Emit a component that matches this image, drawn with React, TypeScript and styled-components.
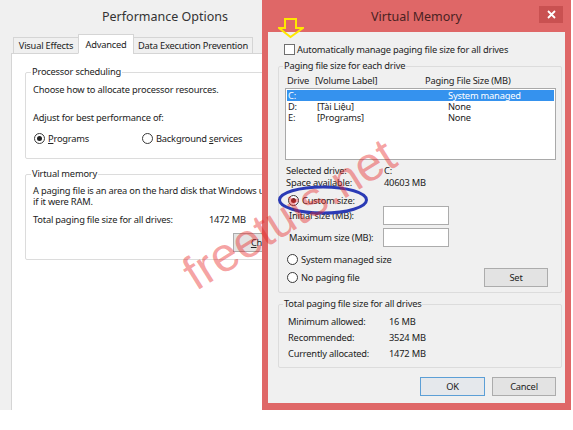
import React from 'react';
import styled, { createGlobalStyle } from 'styled-components';

const GlobalStyle = createGlobalStyle`
  html, body {
    margin: 0;
    padding: 0;
    background: #fff;
  }
  body {
    font-family: "Noto Sans", "Liberation Sans", sans-serif;
    font-size: 9.3px;
    letter-spacing: -0.2px;
    color: #222;
  }
`;

const Screen = styled.div`
  position: relative;
  width: 573px;
  height: 430px;
  overflow: hidden;
`;

const Stage = styled.div`
  display: flex;
  height: 410px;
`;

/* ---------- Performance Options (left, partly hidden) ---------- */

const PerfClip = styled.div`
  flex: none;
  width: 262px;
  height: 100%;
  overflow: hidden;
`;

const PerfWindow = styled.div`
  width: 330px;
  height: 100%;
  background: #f0f0f0;
  display: flex;
  flex-direction: column;
`;

const PerfTitle = styled.div`
  height: 32px;
  display: flex;
  align-items: center;
  justify-content: center;
  font-size: 12.5px;
  letter-spacing: 0;
  color: #333;
`;

const TabStrip = styled.div`
  position: relative;
  z-index: 1;
  height: 22px;
  margin-bottom: -1px;
  padding-left: 13px;
  display: flex;
  align-items: flex-end;
`;

const Tab = styled.div<{ $active?: boolean; $w: number }>`
  box-sizing: border-box;
  width: ${p => p.$w}px;
  height: ${p => (p.$active ? 20 : 17)}px;
  margin-right: -1px;
  display: flex;
  align-items: center;
  justify-content: center;
  border: 1px solid #d5d5d5;
  border-bottom-color: ${p => (p.$active ? '#fff' : '#d5d5d5')};
  background: ${p => (p.$active ? '#fff' : '#f0f0f0')};
  white-space: nowrap;
`;

const TabPanel = styled.div`
  flex: 1;
  margin-left: 11px;
  padding: 12px 13px 0;
  background: #fff;
  border: 1px solid #d5d5d5;
  border-bottom: none;
`;

const Group = styled.fieldset<{ $mt?: number; $pl?: number; $pr?: number; $pb?: number }>`
  margin: ${p => p.$mt ?? 0}px 0 0;
  padding: 0 ${p => p.$pr ?? 7}px ${p => p.$pb ?? 0}px ${p => p.$pl ?? 7}px;
  min-width: 0;
  border: 1px solid #dcdcdc;
  border-radius: 2px;
  display: flex;
  flex-direction: column;
`;

const Legend = styled.legend`
  margin-left: -2px;
  padding: 0 1px;
  line-height: 12px;
  white-space: nowrap;
`;

const Line = styled.div<{ $mt?: number; $h?: number }>`
  margin-top: ${p => p.$mt ?? 0}px;
  line-height: ${p => p.$h ?? 12}px;
  white-space: nowrap;
`;

const RadioRow = styled.div<{ $mt?: number }>`
  margin-top: ${p => p.$mt ?? 0}px;
  display: grid;
  grid-template-columns: 108px auto;
  padding-left: 1px;
`;

const Option = styled.label<{ $indent?: number }>`
  display: flex;
  align-items: center;
  gap: 3px;
  height: 12px;
  padding-left: ${p => p.$indent ?? 0}px;
  white-space: nowrap;
`;

const Radio = styled.span<{ $checked?: boolean; $dot?: string }>`
  flex: none;
  box-sizing: border-box;
  width: 11px;
  height: 11px;
  border-radius: 50%;
  border: 1px solid #3a3a3a;
  background: #fff;
  display: inline-flex;
  align-items: center;
  justify-content: center;
  &::after {
    content: '';
    width: 5px;
    height: 5px;
    border-radius: 50%;
    background: ${p => (p.$checked ? p.$dot ?? '#222' : 'transparent')};
  }
`;

const ValueRow = styled.div<{ $mt?: number; $label: number; $h?: number; $pl?: number }>`
  margin-top: ${p => p.$mt ?? 0}px;
  padding-left: ${p => p.$pl ?? 0}px;
  display: grid;
  grid-template-columns: ${p => p.$label}px auto;
  align-items: center;
  height: ${p => p.$h ?? 12}px;
  white-space: nowrap;
`;

const ButtonRow = styled.div<{ $mt?: number; $mr?: number }>`
  margin-top: ${p => p.$mt ?? 0}px;
  margin-right: ${p => p.$mr ?? 0}px;
  display: flex;
  justify-content: flex-end;
  gap: 7px;
`;

const Button = styled.div<{ $w: number; $default?: boolean }>`
  box-sizing: border-box;
  width: ${p => p.$w}px;
  height: 19px;
  display: flex;
  align-items: center;
  justify-content: center;
  background: ${p => (p.$default ? '#e5e8ec' : '#e3e3e3')};
  border: 1px solid ${p => (p.$default ? '#5c9fd6' : '#acacac')};
  color: #222;
  white-space: nowrap;
`;

/* ---------- Virtual Memory (right) ---------- */

const VmWindow = styled.div`
  position: relative;
  flex: none;
  box-sizing: border-box;
  width: 309px;
  height: 100%;
  padding: 0 6px 7px;
  background: #df6767;
  display: flex;
  flex-direction: column;
`;

const VmTitleBar = styled.div`
  height: 32px;
  display: grid;
  grid-template-columns: 1fr auto 1fr;
`;

const VmTitle = styled.div`
  grid-column: 2;
  align-self: center;
  font-size: 12.5px;
  letter-spacing: 0;
  color: #4a2222;
  white-space: nowrap;
`;

const CloseButton = styled.div`
  grid-column: 3;
  justify-self: end;
  margin: 6px 2px 0 0;
  width: 24px;
  height: 17px;
  background: #c95151;
  display: flex;
  align-items: center;
  justify-content: center;
`;

const Client = styled.div`
  flex: 1;
  padding: 11px 3px 0 10px;
  background: #f0f0f0;
  display: flex;
  flex-direction: column;
`;

const CheckRow = styled.label`
  display: flex;
  align-items: center;
  gap: 2px;
  height: 12px;
  padding-left: 6px;
  white-space: nowrap;
`;

const CheckBox = styled.span`
  flex: none;
  box-sizing: border-box;
  width: 11px;
  height: 11px;
  border: 1px solid #6f6f6f;
  background: #fff;
`;

const DriveHeader = styled.div`
  margin-top: 3px;
  display: grid;
  grid-template-columns: 28px 110px auto;
  padding-left: 2px;
  line-height: 12px;
  white-space: nowrap;
`;

const DriveList = styled.div`
  margin-top: 1px;
  margin-right: 1px;
  height: 72px;
  box-sizing: border-box;
  padding: 1px;
  background: #fff;
  border: 1px solid #a9a9a9;
`;

const DriveRow = styled.div<{ $selected?: boolean }>`
  display: grid;
  grid-template-columns: 29px 131px auto;
  height: 11px;
  line-height: 11px;
  padding-left: 1px;
  background: ${p => (p.$selected ? '#3592ee' : 'transparent')};
  color: ${p => (p.$selected ? '#fff' : '#222')};
  white-space: nowrap;
`;

const SizeRow = styled.div<{ $mt?: number }>`
  margin-top: ${p => p.$mt ?? 0}px;
  display: grid;
  grid-template-columns: 94px auto;
  align-items: center;
  padding-left: 4px;
  white-space: nowrap;
`;

const SizeInput = styled.div`
  box-sizing: border-box;
  width: 66px;
  height: 19px;
  background: #fff;
  border: 1px solid #acacac;
`;

const SplitRow = styled.div<{ $mt?: number }>`
  margin-top: ${p => p.$mt ?? 0}px;
  display: flex;
  align-items: center;
  justify-content: space-between;
  padding-right: 9px;
`;

const ArrowMark = styled.svg`
  position: absolute;
  left: 16px;
  top: 17px;
`;

const CircleMark = styled.svg`
  position: absolute;
  left: 14px;
  top: 184px;
`;

const Watermark = styled.div`
  position: absolute;
  left: 289px;
  top: 214px;
  transform: translate(-50%, -50%) rotate(-32deg);
  font-family: "Liberation Sans", Arial, sans-serif;
  font-size: 48px;
  letter-spacing: 0;
  color: rgba(232, 32, 32, 0.42);
  white-space: nowrap;
  pointer-events: none;
`;

const drives = [
  { letter: 'C:', label: '', size: 'System managed', selected: true },
  { letter: 'D:', label: '[Tài Liệu]', size: 'None' },
  { letter: 'E:', label: '[Programs]', size: 'None' },
];

const totals = [
  ['Minimum allowed:', '16 MB'],
  ['Recommended:', '3524 MB'],
  ['Currently allocated:', '1472 MB'],
];

const PerformanceOptions = () => (
  <PerfClip>
    <PerfWindow>
      <PerfTitle>Performance Options</PerfTitle>
      <TabStrip>
        <Tab $w={66}>Visual Effects</Tab>
        <Tab $w={56} $active>Advanced</Tab>
        <Tab $w={120}>Data Execution Prevention</Tab>
      </TabStrip>
      <TabPanel>
        <Group $pb={14}>
          <Legend>Processor scheduling</Legend>
          <Line $mt={6}>Choose how to allocate processor resources.</Line>
          <Line $mt={16}>Adjust for best performance of:</Line>
          <RadioRow $mt={8}>
            <Option>
              <Radio $checked />
              <span><u>P</u>rograms</span>
            </Option>
            <Option>
              <Radio />
              <span>Background <u>s</u>ervices</span>
            </Option>
          </RadioRow>
        </Group>
        <Group $mt={9} $pb={7}>
          <Legend>Virtual memory</Legend>
          <Line $mt={5} $h={11}>
            A paging file is an area on the hard disk that Windows uses as
            <br />
            if it were RAM.
          </Line>
          <ValueRow $mt={6} $label={176}>
            <span>Total paging file size for all drives:</span>
            <span>1472 MB</span>
          </ValueRow>
          <ButtonRow $mt={8}>
            <Button $w={75}><span><u>C</u>hange...</span></Button>
          </ButtonRow>
        </Group>
      </TabPanel>
    </PerfWindow>
  </PerfClip>
);

const VirtualMemory = () => (
  <VmWindow>
    <VmTitleBar>
      <VmTitle>Virtual Memory</VmTitle>
      <CloseButton>
        <svg width="9" height="9" viewBox="0 0 9 9">
          <path d="M1 1L8 8M8 1L1 8" stroke="#fff" strokeWidth="1.8" />
        </svg>
      </CloseButton>
    </VmTitleBar>
    <Client>
      <CheckRow>
        <CheckBox />
        <span>Automatically manage paging file size for all drives</span>
      </CheckRow>
      <Group $mt={5} $pl={6} $pr={4} $pb={5}>
        <Legend>Paging file size for each drive</Legend>
        <DriveHeader>
          <span>Drive</span>
          <span>[Volume Label]</span>
          <span>Paging File Size (MB)</span>
        </DriveHeader>
        <DriveList>
          {drives.map(d => (
            <DriveRow key={d.letter} $selected={d.selected}>
              <span>{d.letter}</span>
              <span>{d.label}</span>
              <span>{d.size}</span>
            </DriveRow>
          ))}
        </DriveList>
        <ValueRow $mt={4} $label={98} $pl={1}>
          <span>Selected drive:</span>
          <span>C:</span>
        </ValueRow>
        <ValueRow $label={98} $pl={1}>
          <span>Space available:</span>
          <span>40603 MB</span>
        </ValueRow>
        <SplitRow $mt={6}>
          <Option $indent={3}>
            <Radio $checked $dot="#7a2a2a" />
            <span>Custom size:</span>
          </Option>
        </SplitRow>
        <SizeRow>
          <span>Initial size (MB):</span>
          <SizeInput />
        </SizeRow>
        <SizeRow $mt={3}>
          <span>Maximum size (MB):</span>
          <SizeInput />
        </SizeRow>
        <SplitRow $mt={6}>
          <Option $indent={2}>
            <Radio />
            <span>System managed size</span>
          </Option>
        </SplitRow>
        <SplitRow $mt={3}>
          <Option $indent={2}>
            <Radio />
            <span>No paging file</span>
          </Option>
          <Button $w={64}>Set</Button>
        </SplitRow>
      </Group>
      <Group $mt={5} $pl={6} $pr={4} $pb={6}>
        <Legend>Total paging file size for all drives</Legend>
        {totals.map(([label, value], i) => (
          <ValueRow key={label} $mt={i === 0 ? 3 : 0} $label={101} $h={16} $pl={3}>
            <span>{label}</span>
            <span>{value}</span>
          </ValueRow>
        ))}
      </Group>
      <ButtonRow $mt={9} $mr={6}>
        <Button $w={65} $default>OK</Button>
        <Button $w={64}>Cancel</Button>
      </ButtonRow>
    </Client>
    <ArrowMark width="26" height="22" viewBox="0 0 26 22">
      <polygon
        points="7,2 18,2 18,11 25,11 12.5,20 1,11 7,11"
        fill="none"
        stroke="#ffe800"
        strokeWidth="2"
        strokeLinejoin="miter"
      />
    </ArrowMark>
    <CircleMark width="94" height="32" viewBox="0 0 94 32">
      <ellipse cx="47" cy="16" rx="43.5" ry="13" fill="none" stroke="#2b3bb5" strokeWidth="3" />
    </CircleMark>
  </VmWindow>
);

export default function App() {
  return (
    <>
      <GlobalStyle />
      <Screen>
        <Stage>
          <PerformanceOptions />
          <VirtualMemory />
        </Stage>
        <Watermark>freetuts.net</Watermark>
      </Screen>
    </>
  );
}
